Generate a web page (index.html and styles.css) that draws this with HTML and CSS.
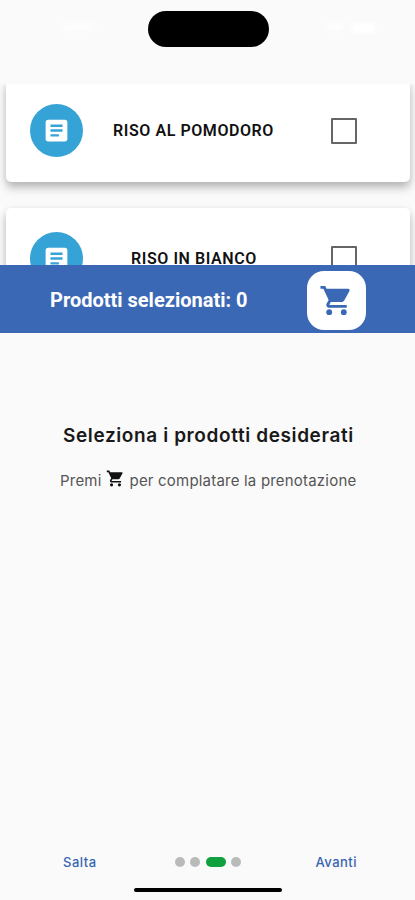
FILE: index.html
```
<!DOCTYPE html>
<html lang="it">
<head>
<meta charset="utf-8">
<title>Prenotazione</title>
<link rel="stylesheet" href="styles.css">
</head>
<body>
<svg class="defs" aria-hidden="true">
  <symbol id="article" viewBox="0 0 24 24"><path fill="currentColor" d="M19 3H5c-1.100 0-2 .9-2 2v14c0 1.100 .9 2 2 2h14c1.100 0 2-.9 2-2V5c0-1.100-.9-2-2-2zm-5 14H7v-2h7v2zm3-4H7v-2h10v2zm0-4H7V7h10v2z"/></symbol>
  <symbol id="cart" viewBox="0 0 24 24"><path fill="currentColor" d="M1 2V4H3L6.600 11.590L5.250 14.040C5.090 14.320 5 14.650 5 15C5 16.100 5.900 17 7 17H19V15H7.420C7.280 15 7.170 14.890 7.170 14.750L7.200 14.630L8.100 13H15.550C16.300 13 16.960 12.590 17.300 11.970L20.880 5.480C21.250 4.820 20.760 4 20 4H5.210L4.270 2Z"/><circle cx="7" cy="20" r="2" fill="currentColor"/><circle cx="17" cy="20" r="2" fill="currentColor"/></symbol>
</svg>
<div class="screen">
  <header class="status"><div class="clock"></div><div class="island"></div><div class="signal"></div><div class="battery"></div></header>
  <main class="products">
    <article class="card">
      <div class="avatar"><svg><use href="#article"/></svg></div>
      <div class="name">RISO AL POMODORO</div>
      <div class="check"></div>
    </article>
    <article class="card">
      <div class="avatar"><svg><use href="#article"/></svg></div>
      <div class="name name-short">RISO IN BIANCO</div>
      <div class="check"></div>
    </article>
  </main>
  <section class="bar">
    <div class="count">Prodotti selezionati: 0</div>
    <div class="cart-button"><svg><use href="#cart"/></svg></div>
  </section>
  <section class="intro">
    <h1>Seleziona i prodotti desiderati</h1>
    <p><span>Premi</span><svg><use href="#cart"/></svg><span>per complatare la prenotazione</span></p>
  </section>
  <footer class="nav">
    <span class="skip">Salta</span>
    <div class="dots"><i></i><i></i><i class="active"></i><i></i></div>
    <span class="next">Avanti</span>
  </footer>
  <div class="home"></div>
</div>
</body>
</html>
```
FILE: styles.css
```
* { box-sizing: border-box; }
body { margin: 0; background: #fafafa; font-family: Roboto, sans-serif; }
.defs { display: none; }
.screen { width: 415px; height: 900px; display: flex; flex-direction: column; overflow: hidden; background: #fafafa; }
.status { height: 84px; padding-top: 11px; flex: none; display: flex; }
.clock, .signal, .battery { height: 8px; margin-top: 12px; border-radius: 4px; background: #fff; filter: blur(2px); }
.clock { width: 34px; margin-left: 61px; opacity: .6; }
.island { width: 121px; height: 36px; margin-left: 52.500px; border-radius: 18px; background: #000; }
.signal { width: 18px; margin-left: 57px; opacity: .7; }
.battery { width: 24px; height: 10px; margin-left: 7px; }
.products { height: 181px; flex: none; overflow: hidden; padding: 0 5px 0 6px; }
.card { height: 101.500px; margin: -4px 0 30.500px; padding: 0 53px 0 24px; display: flex; align-items: center; background: #fff; border-radius: 5px; box-shadow: 0 6px 9px rgba(0,0,0,.24), 0 1px 7px rgba(0,0,0,.07); }
.avatar { width: 53px; height: 53px; flex: none; border-radius: 50%; background: #36a3d7; color: #fff; display: flex; align-items: center; justify-content: center; }
.avatar svg { width: 29px; height: 29px; }
.name { flex: 1; margin-left: 30px; font-size: 16px; font-weight: 600; letter-spacing: .57px; color: #111; white-space: nowrap; }
.name-short { margin-left: 48px; }
.check { width: 26px; height: 26px; border: 2px solid #666; border-radius: 1px; }
.bar { height: 67.500px; flex: none; background: #3b68b5; display: flex; align-items: center; justify-content: space-between; padding: 3px 49px 0 50px; }
.count { color: #fff; font-size: 20px; font-weight: 700; white-space: nowrap; }
.cart-button { width: 59px; height: 59px; border-radius: 17px; background: #fff; color: #3b68b5; display: flex; align-items: center; justify-content: center; }
.cart-button svg { width: 35px; height: 35px; }
.intro { flex: 1; padding-top: 91px; font-family: Inter, sans-serif; }
h1 { margin: 0 0 0 63px; font-size: 19px; line-height: 24px; font-weight: 600; letter-spacing: .61px; color: #191919; white-space: nowrap; }
p { margin: 23px 0 0 60px; display: flex; align-items: center; height: 20px; font-size: 15px; letter-spacing: .2px; color: #555; white-space: nowrap; }
p svg { width: 19px; height: 19px; margin: -4px 5px 0 4px; color: #111; }
.nav { height: 20px; flex: none; display: flex; align-items: center; justify-content: space-between; padding: 0 58px 0 63px; font-family: Inter, sans-serif; font-size: 13px; font-weight: 500; letter-spacing: .48px; color: #3765b0; }
.dots { display: flex; gap: 5.300px; margin-left: 4px; }
.dots i { width: 10px; height: 10px; border-radius: 5px; background: #bababa; }
.dots .active { width: 20px; background: #10a13e; }
.home { width: 148px; height: 4px; flex: none; margin: 16px 0 8px 134px; border-radius: 2px; background: #000; }
```
